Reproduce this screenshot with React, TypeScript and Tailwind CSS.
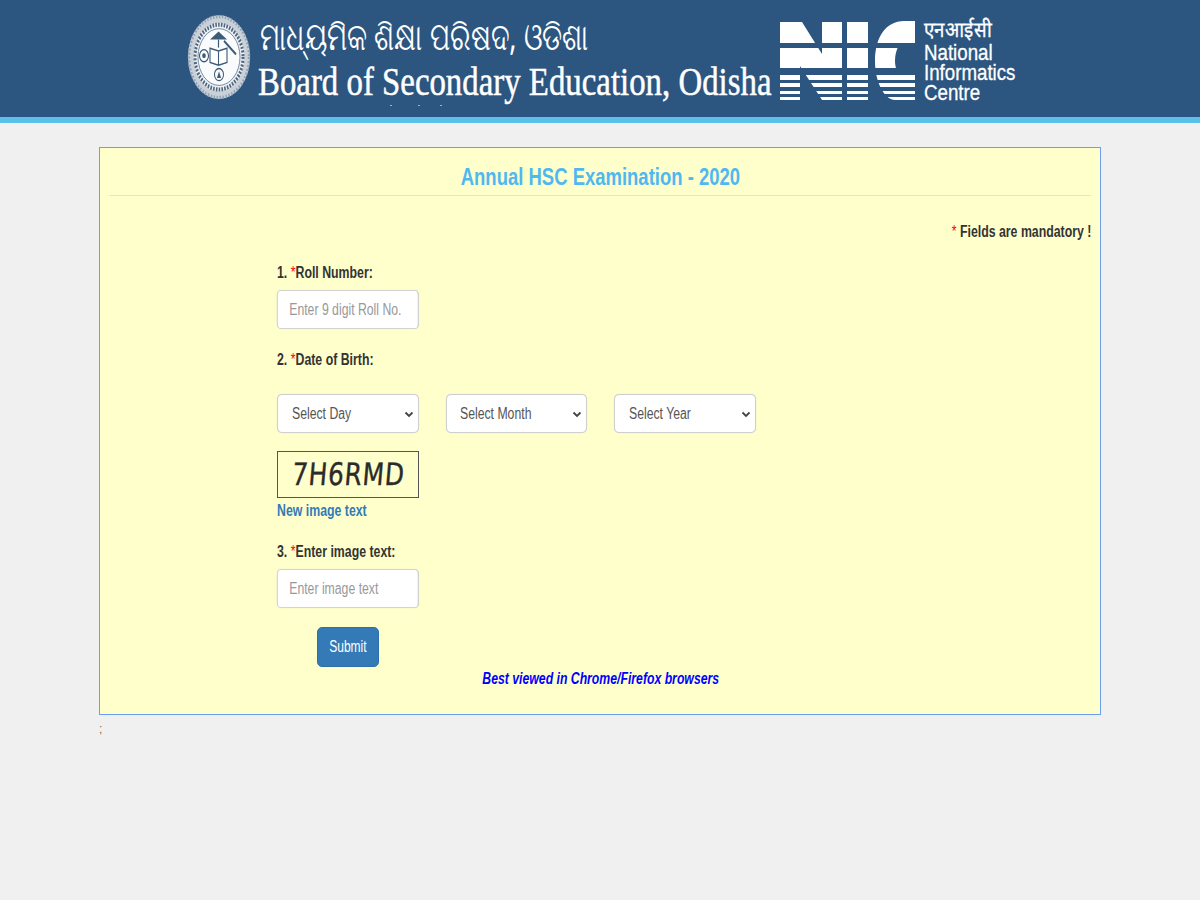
import React from "react";

const T = ({ children, c = "scale-x-[.77]" }: { children: React.ReactNode; c?: string }) => (
  <span className={`inline-block origin-left whitespace-nowrap ${c}`}>{children}</span>
);

const Seal = () => (
  <svg width="66" height="86" viewBox="0 0 66 86" className="shrink-0">
    <g transform="translate(0 -15) scale(1 1.35)">
      <circle cx="33" cy="43" r="31" fill="#c9d0d8" />
      <circle cx="33" cy="43" r="30" fill="none" stroke="#93a4b7" strokeWidth="2.4" strokeDasharray="1.5 1.5" />
      <circle cx="33" cy="43" r="25.5" fill="#eef1f4" />
      <circle cx="33" cy="43" r="24" fill="none" stroke="#51677f" strokeWidth="3" strokeDasharray="1.6 1.2" />
      <circle cx="33" cy="43" r="21" fill="#fafbfc" stroke="#5a7693" strokeWidth="0.7" />
      <path d="M24 30h17l-8.5-6z" fill="#3d5a78" />
      <path d="M32.5 30v6" stroke="#3d5a78" strokeWidth="1.2" />
      <path d="M24 36.500l8.500 2 8.500-2v10.500l-8.500 2-8.500-2zM32.500 38.500v10.500" fill="#fff" stroke="#3d5a78" strokeWidth="1.1" />
      <path d="M38 31l12 10" stroke="#3d5a78" strokeWidth="1.8" />
      <circle cx="18" cy="42" r="4.500" fill="none" stroke="#3d5a78" strokeWidth="1.100" />
      <circle cx="18" cy="42" r="1.800" fill="#3d5a78" />
      <circle cx="33" cy="56" r="4.500" fill="none" stroke="#3d5a78" strokeWidth="1" />
      <path d="M31 58.500l2-5 2 5z" fill="#3d5a78" />
    </g>
  </svg>
);

const Nic = () => {
  const bg = "#2c5680";
  return (
    <svg width="136" height="80" viewBox="0 0 136 80" className="shrink-0">
      <path d="M0 1h22l20 32V1h20v78H42L20 45v34H0z" fill="#fff" />
      <rect x="67" y="1" width="21" height="78" fill="#fff" />
      <path d="M135 0v22h-14c-4 4-6 11-6 18 0 6 2 11 5 14h15v25h-20C105 79 95 62 95 40 95 16 106 0 124 0z" fill="#fff" />
      <rect x="0" y="22" width="136" height="5" fill={bg} />
      <rect x="0" y="47" width="136" height="7" fill={bg} />
      <rect x="0" y="59" width="136" height="3" fill={bg} />
      <rect x="0" y="66" width="136" height="4" fill={bg} />
      <rect x="0" y="73" width="136" height="3" fill={bg} />
    </svg>
  );
};

const Label = ({ n, text }: { n: string; text: string }) => (
  <div className="h-[20px] text-[16px] leading-[20px] font-bold text-[#333]">
    <T>
      {n} <span className="text-[#ff0000] font-normal">*</span>
      {text}
    </T>
  </div>
);

const Field = ({ text }: { text: string }) => (
  <input
    readOnly
    placeholder={text}
    className="block w-[185px] h-[39px] origin-left scale-x-[.765] rounded-[5px] border border-[#cfcfcf] bg-white px-[15px] text-[16px] font-['Liberation_Sans',sans-serif] text-[#555] placeholder:text-[#999] shadow-[0_0_1px_#ccc]"
  />
);

const Sel = ({ text }: { text: string }) => (
  <div className="w-[141.5px] shrink-0 h-[39px] flex items-center justify-between rounded-[5px] border border-[#cfcfcf] bg-white pl-[13.5px] pr-[3px] shadow-[0_0_1px_#ccc]">
    <span className="text-[16px] text-[#555] leading-[20px] w-[100px]">
      <T c="scale-x-[.765]">{text}</T>
    </span>
    <svg width="12" height="12" viewBox="0 0 12 12">
      <path d="M2.500 4.500L6 8l3.500-3.500" fill="none" stroke="#444" strokeWidth="1.800" />
    </svg>
  </div>
);

export default function App() {
  return (
    <div className="min-h-[900px] bg-[#f0f0f0] font-['Liberation_Sans',sans-serif] overflow-hidden">
      <header className="h-[123px] bg-[#2c5680] border-b-[6px] border-[#5bc0e8] flex items-start pl-[186px] relative">
        <div className="mt-[14px]">
          <Seal />
        </div>
        <div className="w-[521px] ml-[6px] pt-[12px] text-white">
          <div className="h-[46px] pl-[2px] text-[38px] leading-[46px] font-['Noto_Sans','DejaVu_Sans',sans-serif]">
            <T c="scale-x-[.715]">ମାଧ୍ୟମିକ ଶିକ୍ଷା ପରିଷଦ, ଓଡିଶା</T>
          </div>
          <div className="h-[46px] text-[41px] leading-[46px] font-['Liberation_Serif',serif] [-webkit-text-stroke:0.5px_white]">
            <T c="scale-x-[.801]">Board of Secondary Education, Odisha</T>
          </div>
        </div>
        <span className="absolute left-[390px] top-[105px] w-[2px] h-[1px] bg-[#9fb0c2]" />
        <span className="absolute left-[418px] top-[105px] w-[2px] h-[1px] bg-[#9fb0c2]" />
        <span className="absolute left-[440px] top-[105px] w-[2px] h-[1px] bg-[#9fb0c2]" />
        <div className="mt-[21px] ml-[1px]">
          <Nic />
        </div>
        <div className="ml-[8px] mt-[20px] text-white text-[21.500px] leading-[20px] [-webkit-text-stroke:0.3px_white]">
          <div className="h-[23px]">
            <T c="scale-x-[.87]">एनआईसी</T>
          </div>
          <div><T c="scale-x-[.87]">National</T></div>
          <div><T c="scale-x-[.87]">Informatics</T></div>
          <div><T c="scale-x-[.87]">Centre</T></div>
        </div>
      </header>

      <main className="mx-[99px] mt-[24px] h-[568px] border border-[#6a9ff0] bg-[#ffffcc] px-[9px]">
        <h1 className="h-[48px] border-b border-[#e2e2dc] text-center text-[#4fb8f0] text-[24px] font-bold leading-[58px]">
          <span className="inline-block scale-x-[.77] whitespace-nowrap">Annual HSC Examination - 2020</span>
        </h1>
        <p className="mt-[26px] h-[20px] text-right text-[16px] font-bold leading-[20px] text-[#333]">
          <span className="inline-block origin-right scale-x-[.77] whitespace-nowrap">
            <span className="text-[#ff0000] font-normal">*</span> Fields are mandatory !
          </span>
        </p>
        <form className="ml-[168px] mt-[21px]">
          <Label n="1." text="Roll Number:" />
          <div className="mt-[7px]">
            <Field text="Enter 9 digit Roll No." />
          </div>
          <div className="mt-[20.500px]">
            <Label n="2." text="Date of Birth:" />
          </div>
          <div className="mt-[24.500px] flex gap-[27px]">
            <Sel text="Select Day" />
            <Sel text="Select Month" />
            <Sel text="Select Year" />
          </div>
          <div className="mt-[18px] w-[142px] h-[47px] border border-[#555] flex items-center justify-center text-[#2b2b2b] text-[31px] font-['DejaVu_Sans',sans-serif] [-webkit-text-stroke:0.4px_#2b2b2b]">
            <span className="inline-block scale-x-[.8] -skew-x-6 whitespace-nowrap tracking-[1px]">7H6RMD</span>
          </div>
          <div className="mt-[3px] h-[20px] text-[16px] leading-[20px] font-bold text-[#337ab7]">
            <T>New image text</T>
          </div>
          <div className="mt-[21px]">
            <Label n="3." text="Enter image text:" />
          </div>
          <div className="mt-[7px]">
            <Field text="Enter image text" />
          </div>
          <button
            type="button"
            className="block mt-[19px] ml-[40px] w-[62px] h-[40px] rounded-[5px] bg-[#337ab7] border border-[#3070a8] text-white text-[16px]"
          >
            <span className="inline-block scale-x-[.75] whitespace-nowrap">Submit</span>
          </button>
        </form>
        <p className="mt-[2px] pl-[2px] text-center text-[16px] leading-[20px] font-bold italic text-[#0000ff]">
          <span className="inline-block scale-x-[.765] whitespace-nowrap">Best viewed in Chrome/Firefox browsers</span>
        </p>
      </main>
      <div className="ml-[99px] mt-[4px] text-[12px] text-[#8a6d3b] leading-[20px]">;</div>
    </div>
  );
}
